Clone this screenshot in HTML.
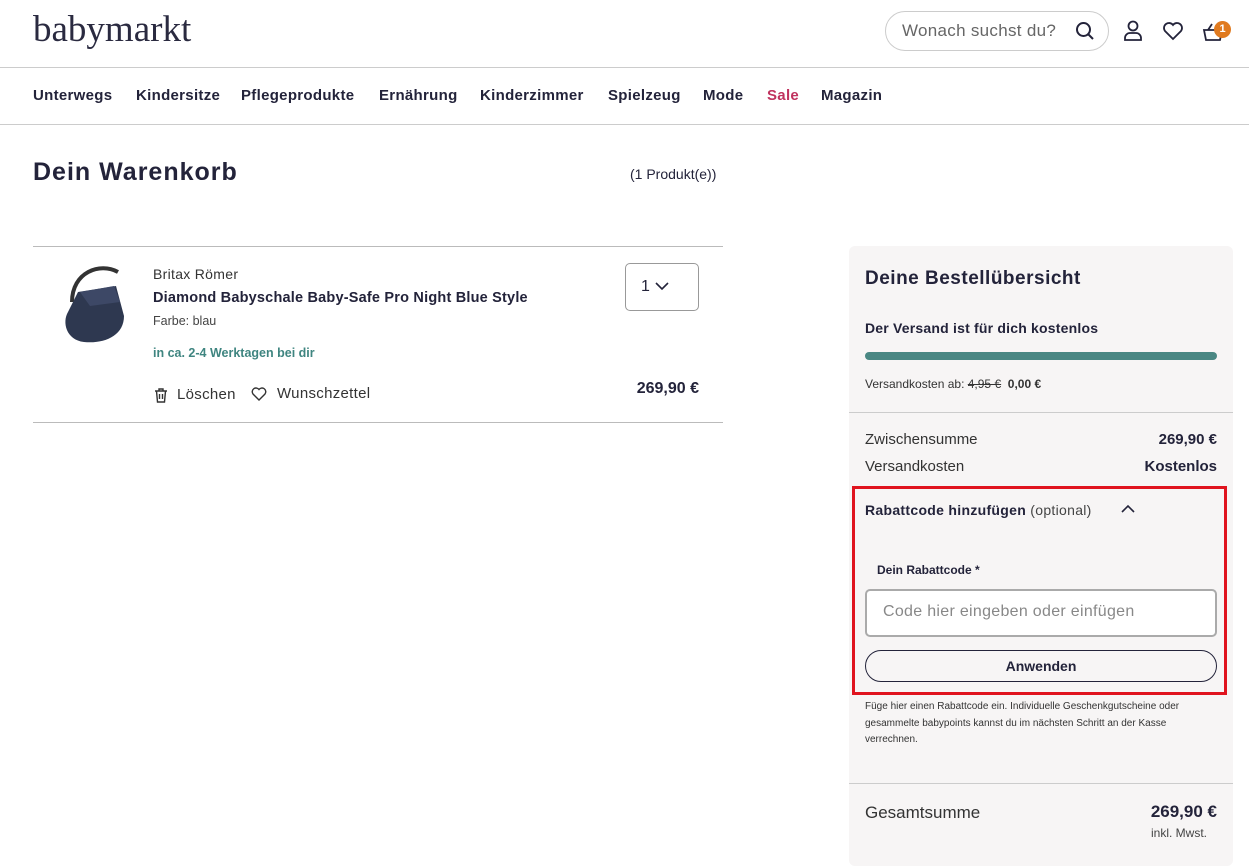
<!DOCTYPE html>
<html><head><meta charset="utf-8"><style>
*{box-sizing:border-box;margin:0;padding:0}
body{width:1249px;height:855px;overflow:hidden;background:#fff;font-family:"Liberation Sans",sans-serif;color:#23233a;position:relative}
.a{position:absolute;white-space:nowrap}
.b{font-weight:bold}
.n{position:absolute;top:87px;font-size:15px;font-weight:bold;letter-spacing:0.3px}
</style></head><body>
<div class="a" style="left:33px;top:8px;font-family:'Liberation Serif',serif;font-size:37px;color:#2a2a40">babymarkt</div>
<div class="a" style="left:885px;top:11px;width:224px;height:40px;border:1px solid #ccc;border-radius:20px"></div>
<div class="a" style="left:902px;top:21px;font-size:17px;color:#666;letter-spacing:0.3px">Wonach suchst du?</div>
<svg class="a" style="left:1075px;top:21px" width="20" height="20" viewBox="0 0 20 20" fill="none" stroke="#23233a" stroke-width="2"><circle cx="8.5" cy="8.5" r="6.5"/><path d="M13.5 13.5L18 18"/></svg>
<svg class="a" style="left:1123px;top:20px" width="20" height="22" viewBox="0 0 20 22" fill="none" stroke="#23233a" stroke-width="1.8"><circle cx="10" cy="6" r="4.5"/><path d="M2 20v-2a5 5 0 0 1 5-5h6a5 5 0 0 1 5 5v2z"/></svg>
<svg class="a" style="left:1162px;top:21px" width="22" height="20" viewBox="0 0 22 20" fill="none" stroke="#23233a" stroke-width="1.8"><path d="M11 18L3 10A4.8 4.8 0 0 1 11 4a4.8 4.8 0 0 1 8 6z"/></svg>
<svg class="a" style="left:1202px;top:22px" width="22" height="20" viewBox="0 0 22 20" fill="none" stroke="#23233a" stroke-width="1.8"><path d="M2 8h18l-2 10H4z M6 8l4-6"/></svg>
<div class="a" style="left:1214px;top:21px;width:17px;height:17px;border-radius:50%;background:#e07a1f;color:#fff;font-size:11px;font-weight:bold;text-align:center;line-height:17px">1</div>
<div class="a" style="left:0;top:67px;width:1249px;height:1px;background:#ccc"></div>
<div class="n" style="left:33px">Unterwegs</div>
<div class="n" style="left:136px">Kindersitze</div>
<div class="n" style="left:241px">Pflegeprodukte</div>
<div class="n" style="left:379px">Ernährung</div>
<div class="n" style="left:480px">Kinderzimmer</div>
<div class="n" style="left:608px">Spielzeug</div>
<div class="n" style="left:703px">Mode</div>
<div class="n" style="left:767px;color:#c0325e">Sale</div>
<div class="n" style="left:821px">Magazin</div>
<div class="a" style="left:0;top:124px;width:1249px;height:1px;background:#ccc"></div>
<div class="a b" style="left:33px;top:158px;font-size:25px;letter-spacing:1px">Dein Warenkorb</div>
<div class="a" style="left:630px;top:166px;font-size:14px">(1 Produkt(e))</div>
<div class="a" style="left:33px;top:246px;width:690px;height:1px;background:#bbb"></div>
<div class="a" style="left:33px;top:422px;width:690px;height:1px;background:#bbb"></div>
<svg class="a" style="left:60px;top:262px" width="72" height="82" viewBox="0 0 72 82"><path d="M12 40C12 10 40 0 58 10" stroke="#333" stroke-width="4" fill="none"/><path d="M18 30l38-6 8 30c0 20-20 28-40 26C6 78 2 60 8 50z" fill="#2e3850"/><path d="M20 30l34-6 6 16-30 4z" fill="#3d4866"/></svg>
<div class="a" style="left:153px;top:266px;font-size:14px;color:#333;letter-spacing:0.3px">Britax Römer</div>
<div class="a b" style="left:153px;top:290px;font-size:14.5px;letter-spacing:0.2px">Diamond Babyschale Baby-Safe Pro Night Blue Style</div>
<div class="a" style="left:153px;top:314px;font-size:12.5px;color:#444">Farbe: blau</div>
<div class="a b" style="left:153px;top:346px;font-size:12.5px;color:#3f8580">in ca. 2-4 Werktagen bei dir</div>
<svg class="a" style="left:154px;top:388px" width="14" height="15" viewBox="0 0 14 15" fill="none" stroke="#333" stroke-width="1.4"><path d="M1 3h12M5 3V1h4v2M2.5 3l1 11h7l1-11M5.5 6v5M8.5 6v5"/></svg>
<div class="a" style="left:177px;top:386px;font-size:15px;color:#333;letter-spacing:0.3px">Löschen</div>
<svg class="a" style="left:251px;top:387px" width="16" height="14" viewBox="0 0 16 14" fill="none" stroke="#333" stroke-width="1.4"><path d="M8 13L2 7A3.4 3.4 0 0 1 8 2.5a3.4 3.4 0 0 1 6 4.5z"/></svg>
<div class="a" style="left:277px;top:385px;font-size:15px;color:#333;letter-spacing:0.3px">Wunschzettel</div>
<div class="a" style="left:625px;top:263px;width:74px;height:48px;border:1.5px solid #999;border-radius:5px"></div>
<div class="a" style="left:641px;top:278px;font-size:16px">1</div>
<svg class="a" style="left:655px;top:282px" width="14" height="9" viewBox="0 0 14 9" fill="none" stroke="#23233a" stroke-width="1.6"><path d="M1 1l6 6 6-6"/></svg>
<div class="a b" style="right:550px;top:380px;font-size:16px">269,90 €</div>
<div class="a" style="left:849px;top:246px;width:384px;height:620px;background:#f7f5f5;border-radius:6px"></div>
<div class="a b" style="left:865px;top:268px;font-size:19px;letter-spacing:0.5px">Deine Bestellübersicht</div>
<div class="a b" style="left:865px;top:320px;font-size:14px;letter-spacing:0.2px">Der Versand ist für dich kostenlos</div>
<div class="a" style="left:865px;top:352px;width:352px;height:8px;border-radius:4px;background:#4a8783"></div>
<div class="a" style="left:865px;top:377px;font-size:12px;color:#333">Versandkosten ab: <s>4,95 €</s> &nbsp;<b>0,00 €</b></div>
<div class="a" style="left:849px;top:412px;width:384px;height:1px;background:#ccc"></div>
<div class="a" style="left:865px;top:431px;font-size:15px;color:#333">Zwischensumme</div>
<div class="a b" style="right:32px;top:431px;font-size:15px">269,90 €</div>
<div class="a" style="left:865px;top:458px;font-size:15px;color:#333">Versandkosten</div>
<div class="a b" style="right:32px;top:458px;font-size:15px">Kostenlos</div>
<div class="a" style="left:852px;top:486px;width:375px;height:209px;border:3px solid #e0141e"></div>
<div class="a" style="left:865px;top:502px;font-size:14px;letter-spacing:0.3px"><b>Rabattcode hinzufügen</b> <span style="color:#444">(optional)</span></div>
<svg class="a" style="left:1121px;top:504px" width="14" height="9" viewBox="0 0 14 9" fill="none" stroke="#23233a" stroke-width="1.6"><path d="M1 8l6-6 6 6"/></svg>
<div class="a b" style="left:877px;top:563px;font-size:12px">Dein Rabattcode *</div>
<div class="a" style="left:865px;top:589px;width:352px;height:48px;border:2px solid #aaa;border-radius:5px;background:#fff"></div>
<div class="a" style="left:883px;top:603px;font-size:16px;color:#888;letter-spacing:0.3px">Code hier eingeben oder einfügen</div>
<div class="a b" style="left:865px;top:650px;width:352px;height:32px;border:1.5px solid #23233a;border-radius:16px;text-align:center;line-height:30px;font-size:14px">Anwenden</div>
<div class="a" style="left:865px;top:699px;font-size:10px;line-height:16.5px;color:#333;white-space:normal;width:345px">Füge hier einen Rabattcode ein. Individuelle Geschenkgutscheine oder gesammelte babypoints kannst du im nächsten Schritt an der Kasse verrechnen.</div>
<div class="a" style="left:849px;top:783px;width:384px;height:1px;background:#ccc"></div>
<div class="a" style="left:865px;top:803px;font-size:17px;color:#333">Gesamtsumme</div>
<div class="a b" style="right:32px;top:802px;font-size:17px">269,90 €</div>
<div class="a" style="right:42px;top:826px;font-size:12px;color:#444">inkl. Mwst.</div>
</body></html>
